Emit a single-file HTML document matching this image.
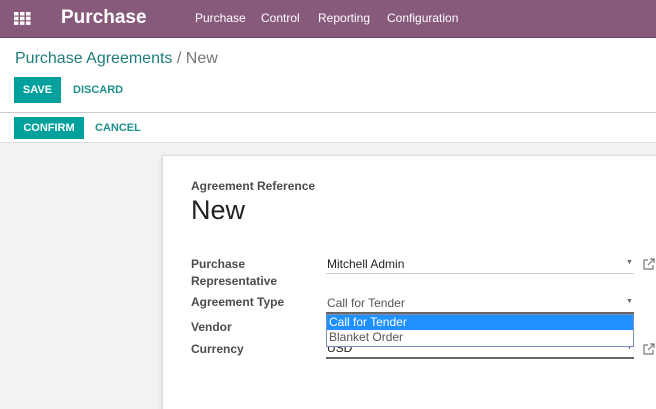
<!DOCTYPE html>
<html style="height:409px;overflow:hidden"><head><style>
*{margin:0;padding:0;box-sizing:border-box}
body{width:656px;height:409px;overflow:hidden;font-family:"Liberation Sans",Arial,sans-serif;background:#f2f2f2;position:relative}
.nav{position:absolute;left:0;top:0;width:656px;height:38px;background:#875a7b;border-bottom:1px solid #6d4763}
.nav .t{position:absolute;color:#fff;font-size:12px;top:11px}
.cp{position:absolute;left:0;top:38px;width:656px;height:105px;background:#fff;border-bottom:1px solid #ddd}
.btn{position:absolute;font-size:11px;font-weight:bold;}
.sheet{position:absolute;left:162px;top:155px;width:500px;height:254px;background:#fff;border:1px solid #ddd;border-bottom:none;box-shadow:0 2px 4px rgba(0,0,0,.15)}
.a{position:absolute}
.lbl{position:absolute;font-size:12px;font-weight:bold;color:#4c4c4c}
</style></head><body>
<div class="nav">
<svg class="a" style="left:14px;top:12px" width="17" height="13"><g fill="#fff"><rect x="0" y="0" width="4.5" height="3.5"/><rect x="6" y="0" width="4.5" height="3.5"/><rect x="12" y="0" width="4.5" height="3.5"/><rect x="0" y="4.7" width="4.5" height="3.5"/><rect x="6" y="4.7" width="4.5" height="3.5"/><rect x="12" y="4.7" width="4.5" height="3.5"/><rect x="0" y="9.4" width="4.5" height="3.5"/><rect x="6" y="9.4" width="4.5" height="3.5"/><rect x="12" y="9.4" width="4.5" height="3.5"/></g></svg>
<div class="t" style="left:61px;top:7px;font-size:19px;font-weight:bold">Purchase</div>
<div class="t" style="left:195px">Purchase</div>
<div class="t" style="left:261px">Control</div>
<div class="t" style="left:318px">Reporting</div>
<div class="t" style="left:387px">Configuration</div>
</div>
<div class="cp">
<div class="a" style="left:15px;top:12px;font-size:16px;color:#1e7c7a">Purchase Agreements <span style="color:#777">/ New</span></div>
<div class="btn" style="left:14px;top:39px;width:47px;height:26px;background:#00a09d;color:#fff;line-height:26px;text-align:center">SAVE</div>
<div class="btn" style="left:73px;top:46px;color:#1e8f8c">DISCARD</div>
<div class="a" style="left:0;top:74px;width:656px;height:1px;background:#ccc"></div>
<div class="btn" style="left:14px;top:79px;width:70px;height:22px;background:#00a09d;color:#fff;line-height:22px;text-align:center">CONFIRM</div>
<div class="btn" style="left:95px;top:84px;color:#1e8f8c">CANCEL</div>
</div>
<div class="sheet"></div>
<div class="lbl" style="left:191px;top:179px">Agreement Reference</div>
<div class="a" style="left:191px;top:195px;font-size:27px;color:#222">New</div>
<div class="lbl" style="left:191px;top:256px;line-height:17px">Purchase<br>Representative</div>
<div class="lbl" style="left:191px;top:295px">Agreement Type</div>
<div class="lbl" style="left:191px;top:320px">Vendor</div>
<div class="lbl" style="left:191px;top:342px">Currency</div>
<div class="a" style="left:327px;top:257px;font-size:12px;color:#222">Mitchell Admin</div>
<div class="a" style="left:326px;top:273px;width:308px;height:1px;background:#ccc"></div>
<div class="a" style="left:327px;top:296px;font-size:12px;color:#555">Call for Tender</div>
<div class="a" style="left:326px;top:312px;width:308px;height:2px;background:#666"></div>
<div class="a" style="left:327px;top:341px;font-size:12px;color:#222">USD</div>
<div class="a" style="left:326px;top:357px;width:308px;height:2px;background:#666"></div>
<div class="a" style="left:626px;top:259px;font-size:7px;color:#666">▼</div>
<div class="a" style="left:626px;top:298px;font-size:7px;color:#666">▼</div>
<div class="a" style="left:626px;top:344px;font-size:7px;color:#666">▼</div>
<svg class="a" style="left:643px;top:258px" width="12" height="12"><path d="M5 2H1v9h9V7M7 1h4v4M11 1L5 7" stroke="#777" fill="none" stroke-width="1.2"/></svg>
<svg class="a" style="left:643px;top:343px" width="12" height="12"><path d="M5 2H1v9h9V7M7 1h4v4M11 1L5 7" stroke="#777" fill="none" stroke-width="1.2"/></svg>
<div class="a" style="left:326px;top:314px;width:308px;height:33px;background:#fff;border:1px solid #7a8fb8">
<div style="height:15px;background:#1e90ff;color:#fff;font-size:12px;padding-left:2px;line-height:15px">Call for Tender</div>
<div style="font-size:12px;color:#555;padding-left:2px;line-height:15px">Blanket Order</div>
</div>
</body></html>
